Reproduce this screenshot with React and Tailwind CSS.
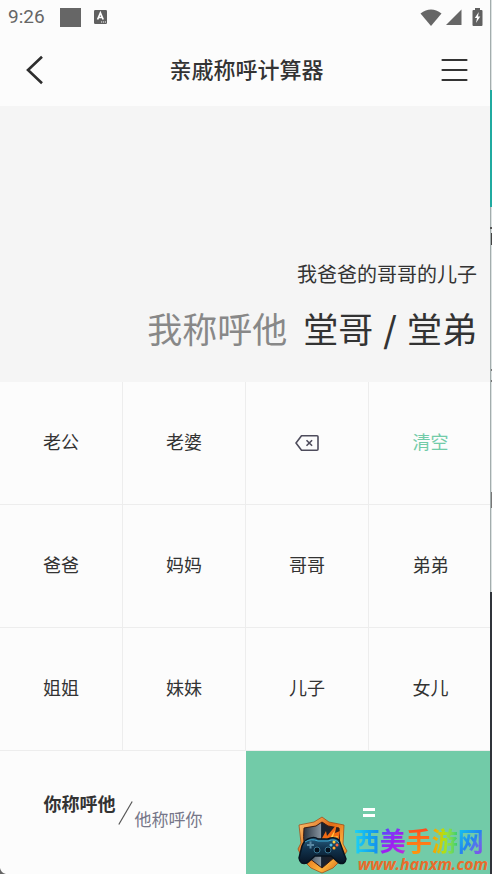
const KEYS = ['老公', '老婆', 'delete', '清空', '爸爸', '妈妈', '哥哥', '弟弟', '姐姐', '妹妹', '儿子', '女儿'];

function StatusBar() {
  return (
    <div className="flex h-[34px] items-center justify-between pl-2 pr-[9px] text-[#666]">
      <div className="flex items-center">
        <span className="font-['Roboto',sans-serif] text-[19px] leading-6">9:26</span>
        <span className="ml-[15px] h-[19px] w-[21px] bg-[#666]" />
        <svg className="ml-[13px]" width="13" height="14" viewBox="0 0 13 14" aria-hidden="true">
          <rect width="13" height="14" rx="1.2" fill="#606060" />
          <path d="M3.6 9.500 6.400 3l2.800 6.500M4.500 7.500h3.800" fill="none" stroke="#fff" strokeWidth="1.700" />
          <path d="M7 12h1.200M9 12h1.200M11 12h1" stroke="#fff" strokeWidth="1.200" />
        </svg>
      </div>
      <div className="flex items-center">
        <svg width="22" height="17" viewBox="0 0 22 17" aria-hidden="true">
          <path d="M.5 4.500Q11-3.500 21.500 4.500L11 17Z" fill="#666" />
        </svg>
        <svg className="ml-1" width="16" height="16" viewBox="0 0 16 16" aria-hidden="true">
          <path d="M15.500 .5V16H0Z" fill="#666" />
        </svg>
        <svg className="ml-[10px]" width="11" height="18" viewBox="0 0 11 18" aria-hidden="true">
          <path d="M3 0h5v2h1.500q1 0 1 1v14q0 1-1 1h-8q-1 0-1-1V3q0-1 1-1H3Z" fill="#606060" />
          <path d="M6.800 4 2.800 10h2.200l-1 5 4.300-6.500H6Z" fill="#fff" />
        </svg>
      </div>
    </div>
  );
}

function Header() {
  return (
    <header className="flex h-[72px] items-center justify-between px-6">
      <button type="button" aria-label="返回" className="flex w-7 items-center">
        <svg width="24" height="30" viewBox="0 0 24 30" fill="none" stroke="#2d2d2d" strokeWidth="2.6">
          <path d="M18 1.800 4 15l14 13.200" />
        </svg>
      </button>
      <h1 className="pb-1 text-[22px] font-medium leading-8 text-[#333]">亲戚称呼计算器</h1>
      <button type="button" aria-label="菜单">
        <svg width="27" height="24" viewBox="0 0 27 24" stroke="#333" strokeWidth="2.200" strokeLinecap="round">
          <path d="M1.500 2h24M1.500 12h24M1.500 22h24" />
        </svg>
      </button>
    </header>
  );
}

function Display() {
  return (
    <section className="flex h-[276px] flex-col justify-end bg-[#f5f5f5] pb-7 pr-[15px] text-right text-[#333]">
      <p className="text-[20px] leading-8">我爸爸的哥哥的儿子</p>
      <p className="mt-3 flex items-baseline justify-end gap-4 text-[35px] leading-[52px]">
        <span className="text-[#888]">我称呼他</span>
        <output>
          堂哥<span className="mx-[10px] font-medium">/</span>堂弟
        </output>
      </p>
    </section>
  );
}

function Key({ label }) {
  return (
    <button
      type="button"
      aria-label={label === 'delete' ? '删除' : undefined}
      className={`flex h-[123px] items-center justify-center border-b border-r border-[#ededed] text-[18px] leading-6 nth-[4n]:border-r-0 ${label === '清空' ? 'text-[#72cba8]' : 'text-[#333]'}`}
    >
      {label === 'delete' ? (
        <svg width="24" height="16" viewBox="0 0 24 16" fill="none" stroke="#4e4c5c" strokeWidth="1.600">
          <path d="M6.500 .8H22q1 0 1 1v12.400q0 1-1 1H6.500L1 8Z" strokeLinejoin="round" />
          <path d="m11.500 5.200 5.600 5.600m0-5.600-5.600 5.600" />
        </svg>
      ) : (
        <span className="pb-1">{label}</span>
      )}
    </button>
  );
}

function BottomRow() {
  return (
    <div className="grid grid-cols-2">
      <button type="button" className="flex h-[123px] items-center justify-center">
        <span className="mb-5 text-[18px] font-bold leading-6 text-[#333]">你称呼他</span>
        <svg className="mx-[2px]" width="15" height="24" viewBox="0 0 15 24" stroke="#555" strokeWidth="1.200">
          <path d="M.8 23.500 14.200 .5" />
        </svg>
        <span className="mt-3 text-[17px] leading-6 text-[#777789]">他称呼你</span>
      </button>
      <button type="button" aria-label="等于" className="flex h-[123px] items-center justify-center bg-[#72cba8]">
        <svg width="12" height="9" viewBox="0 0 12 9" fill="#fff">
          <path d="M0 0h12v3H0zM0 6h12v3H0z" />
        </svg>
      </button>
    </div>
  );
}

function Shield() {
  return (
    <svg width="52" height="58" viewBox="0 0 52 58" aria-hidden="true">
      <defs>
        <linearGradient id="rim" x1="0" y1="0" x2="1" y2="1">
          <stop offset="0" stopColor="#ffd080" />
          <stop offset=".4" stopColor="#e06a16" />
          <stop offset=".7" stopColor="#ffb43c" />
          <stop offset="1" stopColor="#b8430c" />
        </linearGradient>
        <linearGradient id="steel" x1="0" y1="0" x2="1" y2="0">
          <stop offset="0" stopColor="#283441" />
          <stop offset=".49" stopColor="#8995a0" />
          <stop offset=".5" stopColor="#152231" />
          <stop offset="1" stopColor="#2d2020" />
        </linearGradient>
        <linearGradient id="pad" x1="0" y1="0" x2="0" y2="1">
          <stop offset="0" stopColor="#286082" />
          <stop offset=".4" stopColor="#123550" />
          <stop offset="1" stopColor="#071525" />
        </linearGradient>
      </defs>
      <path d="M26 1 33 6 48 9 47 28 51 35 45 44 37 52 26 57 15 52 7 44 2 33 5 27 3 9 18 6Z" fill="url(#rim)" stroke="#9b4310" strokeWidth=".7" />
      <path d="M26 6 32 10 43 12Q45 29 39 41L26 52 13 42Q6 30 8 12L20 10Z" fill="url(#steel)" stroke="#3b1b12" strokeWidth="1" />
      <path d="M17 29 22 22 25 24 30 15 31 20 41 8 39 17 44 15 42 29Z" fill="#f36b13" />
      <path d="M24 28 30 22 33 24 39 14 37 21 42 20 38 29Z" fill="#ffcc45" />
      <path d="M12 23Q18 20 22 23H32Q38 20 43 24L50 43Q49 49 43 47L35 40H19L11 47Q4 49 3 42L6 30Q8 25 12 23Z" fill="url(#pad)" stroke="#06131f" strokeWidth="1.500" />
      <path d="M9 26Q15 22 22 25H32Q39 22 43 27" fill="none" stroke="#3faad1" />
      <path d="M11 29h7M14.500 25.500v7" stroke="#5988a3" strokeWidth="2" />
      <g fill="#06111d" stroke="#397591">
        <circle cx="21" cy="34" r="3" />
        <circle cx="32" cy="34" r="3" />
      </g>
      <circle cx="38" cy="26" r="1.500" fill="#ffcf42" />
      <circle cx="35" cy="29" r="1.500" fill="#4cbfe9" />
      <circle cx="41" cy="29" r="1.500" fill="#ff653d" />
      <circle cx="38" cy="32" r="1.500" fill="#ffad32" />
    </svg>
  );
}

function Watermark() {
  return (
    <div className="pointer-events-none absolute bottom-0 right-1 flex items-end">
      <Shield />
      <div className="ml-[6px] flex flex-col items-start">
        <div className="-mb-0.5 flex font-['Liberation_Sans','Noto_Sans_CJK_SC',sans-serif] text-[26px] font-bold leading-7">
          <span className="bg-linear-to-r from-[#20d4f4] to-[#1689ec] bg-clip-text text-transparent">西</span>
          <span className="bg-linear-to-br from-[#3f48ff] via-[#9b20f2] to-[#c02ad8] bg-clip-text text-transparent">美</span>
          <span className="bg-linear-to-b from-[#ff481c] to-[#ff9c08] bg-clip-text text-transparent">手</span>
          <span className="bg-linear-to-r from-[#ff9700] via-[#a8e313] to-[#19cf72] bg-clip-text text-transparent">游</span>
          <span className="bg-linear-to-br from-[#12c9ed] via-[#2484ee] to-[#8c38e8] bg-clip-text text-transparent">网</span>
        </div>
        <span className="pl-1 font-['Open_Sans',sans-serif] text-[16px] font-bold italic leading-5 text-[#e96c2c]">www.hanxm.com</span>
      </div>
    </div>
  );
}

function WindowEdge() {
  return (
    <div className="absolute inset-y-0 right-0 flex w-[2px] flex-col bg-linear-to-r from-[#a3adad] from-50% to-[#dce2e2] to-50%" aria-hidden="true">
      <span className="h-[90px] shrink-0" />
      <span className="h-[117px] shrink-0 bg-[#20aaa0]" />
      <span className="h-5 shrink-0" />
      <span className="h-[2px] shrink-0 bg-[#555]" />
      <span className="h-1 shrink-0" />
      <span className="ml-px h-3 shrink-0 bg-[#444]" />
      <span className="h-[124px] shrink-0" />
      <span className="ml-px h-[2px] shrink-0 bg-[#777]" />
      <span className="h-[9px] shrink-0" />
      <span className="ml-px h-[2px] shrink-0 bg-[#777]" />
      <span className="h-[110px] shrink-0" />
      <span className="ml-px h-4 shrink-0 bg-[#777]" />
      <span className="h-[84px] shrink-0" />
      <span className="grow bg-[#30343a]" />
    </div>
  );
}

export default function App() {
  return (
    <div className="relative min-h-screen overflow-hidden bg-[#fcfcfc] font-['Noto_Sans_CJK_SC',sans-serif]">
      <main>
        <StatusBar />
        <Header />
        <Display />
        <div className="grid grid-cols-4">
          {KEYS.map((label) => (
            <Key key={label} label={label} />
          ))}
        </div>
        <BottomRow />
      </main>
      <WindowEdge />
      <Watermark />
      <svg className="absolute bottom-0 left-0" width="6" height="6" viewBox="0 0 6 6" aria-hidden="true">
        <path d="M0 0Q1 5 6 6H0Z" fill="#666" />
      </svg>
    </div>
  );
}
